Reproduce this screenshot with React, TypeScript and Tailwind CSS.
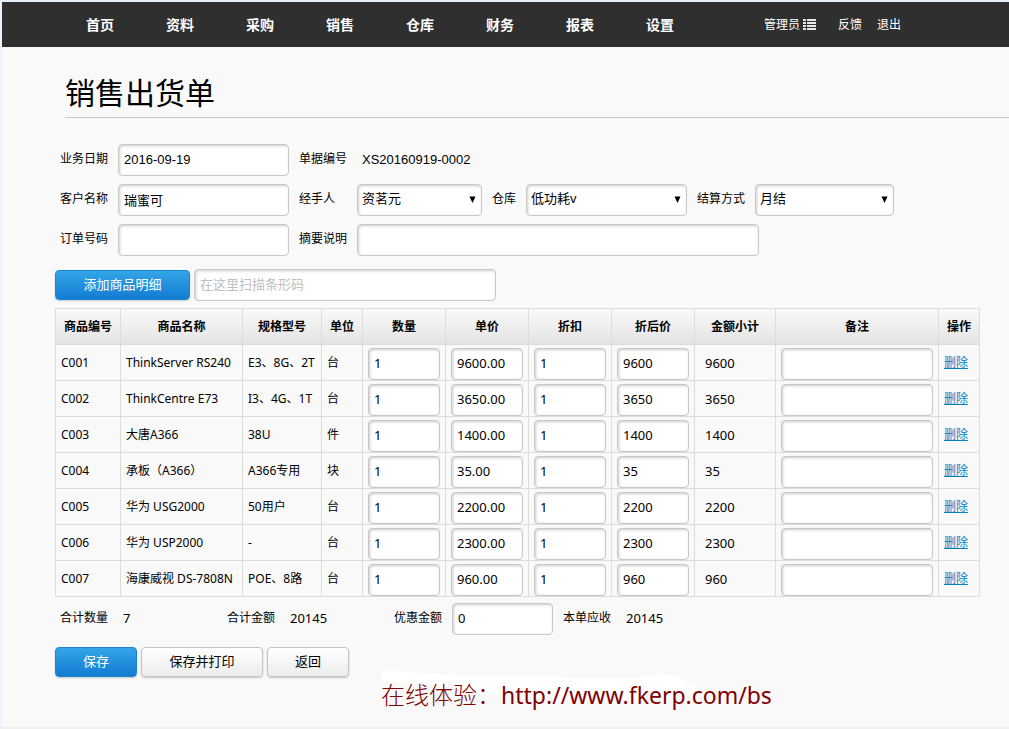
import React, { useState } from 'react';

const navItems = ['首页', '资料', '采购', '销售', '仓库', '财务', '报表', '设置'];

interface OrderLine {
  code: string;
  name: string;
  spec: string;
  unit: string;
  qty: string;
  price: string;
  discount: string;
  net: string;
  subtotal: string;
}

const initialLines: OrderLine[] = [
  { code: 'C001', name: 'ThinkServer RS240', spec: 'E3、8G、2T', unit: '台', qty: '1', price: '9600.00', discount: '1', net: '9600', subtotal: '9600' },
  { code: 'C002', name: 'ThinkCentre E73', spec: 'I3、4G、1T', unit: '台', qty: '1', price: '3650.00', discount: '1', net: '3650', subtotal: '3650' },
  { code: 'C003', name: '大唐A366', spec: '38U', unit: '件', qty: '1', price: '1400.00', discount: '1', net: '1400', subtotal: '1400' },
  { code: 'C004', name: '承板（A366）', spec: 'A366专用', unit: '块', qty: '1', price: '35.00', discount: '1', net: '35', subtotal: '35' },
  { code: 'C005', name: '华为 USG2000', spec: '50用户', unit: '台', qty: '1', price: '2200.00', discount: '1', net: '2200', subtotal: '2200' },
  { code: 'C006', name: '华为 USP2000', spec: '-', unit: '台', qty: '1', price: '2300.00', discount: '1', net: '2300', subtotal: '2300' },
  { code: 'C007', name: '海康威视 DS-7808N', spec: 'POE、8路', unit: '台', qty: '1', price: '960.00', discount: '1', net: '960', subtotal: '960' },
];

const columns = [
  { title: '商品编号', width: 'w-[65px]' },
  { title: '商品名称', width: 'w-[122px]' },
  { title: '规格型号', width: 'w-[79px]' },
  { title: '单位', width: 'w-[41px]' },
  { title: '数量', width: 'w-[83px]' },
  { title: '单价', width: 'w-[83px]' },
  { title: '折扣', width: 'w-[83px]' },
  { title: '折后价', width: 'w-[83px]' },
  { title: '金额小计', width: 'w-[81px]' },
  { title: '备注', width: '' },
  { title: '操作', width: 'w-[41px]' },
];

const field =
  'h-8 rounded border border-[#c8c8c8] bg-white px-[5px] pb-0.5 text-[13px] text-black shadow-[inset_1px_1px_3px_rgba(0,0,0,0.2)] outline-none placeholder:text-[#c0c0c0]';
const arial = "font-['Liberation_Sans','Noto_Sans_CJK_SC',sans-serif]";
const blueButton =
  'h-[30px] rounded border border-[#1c85cf] bg-linear-to-b from-[#33a5e8] to-[#127cd2] text-[13px] text-white shadow-[0_1px_2px_rgba(0,0,0,0.2)]';
const grayButton =
  'h-[30px] rounded border border-[#c4c4c4] bg-linear-to-b from-white to-[#ececec] text-[13px] text-black shadow-[0_1px_2px_rgba(0,0,0,0.2)]';
const fieldCell = 'pt-[3px]';

const Label: React.FC<{ htmlFor: string; children: string; className?: string }> = ({ htmlFor, children, className = 'w-12' }) => (
  <label htmlFor={htmlFor} className={`shrink-0 whitespace-nowrap pb-0.5 ${className}`}>{children}</label>
);

const Select: React.FC<{ id: string; value: string; className: string }> = ({ id, value, className }) => (
  <div className={`relative ${className}`}>
    <select id={id} defaultValue={value} className={`${field} ${arial} w-full appearance-none pl-1 pr-4`}>
      <option>{value}</option>
    </select>
    <svg className="pointer-events-none absolute right-1.5 top-3 h-[7px] w-[7px]" viewBox="0 0 7 7" aria-hidden="true">
      <path d="M0.5 0.5h6L3.5 7z" fill="#000" />
    </svg>
  </div>
);

const Header: React.FC = () => (
  <header className="flex h-[45px] items-center bg-[#2f2f2f] pl-[58px] text-white">
    <nav className="flex text-sm font-bold">
      {navItems.map((item) => (
        <a key={item} href="#" className="w-20 text-center">{item}</a>
      ))}
    </nav>
    <div className="ml-16 flex items-center whitespace-nowrap">
      <a href="#" className="flex items-center gap-[3px]">
        管理员
        <svg className="h-[11px] w-[13px]" viewBox="0 0 13 11" fill="#e8e8e8" aria-hidden="true">
          <path d="M0 0h3v2H0zM4 0h9v2H4zM0 3h3v2H0zM4 3h9v2H4zM0 6h3v2H0zM4 6h9v2H4zM0 9h3v2H0zM4 9h9v2H4z" />
        </svg>
      </a>
      <a href="#" className="ml-[22px]">反馈</a>
      <a href="#" className="ml-[15px]">退出</a>
    </div>
  </header>
);

const App: React.FC = () => {
  const [lines, setLines] = useState(initialLines);

  const removeLine = (e: React.MouseEvent, code: string) => {
    e.preventDefault();
    setLines(lines.filter((line) => line.code !== code));
  };

  return (
    <div className="min-h-screen border-y-2 border-l-2 border-t-[#e9eff8] border-b-[#efefef] border-l-[#edf2fb] bg-[#f9f9f9] font-['Noto_Sans','Noto_Sans_CJK_SC',sans-serif] text-xs text-black">
      <Header />

      <h1 className="ml-[63px] mt-[22px] border-b border-[#c8c8c8] pb-1 font-['Noto_Sans_CJK_SC',sans-serif] text-3xl font-normal leading-[44px]">销售出货单</h1>

      <form className="ml-[53px] mr-[29px]" onSubmit={(e) => e.preventDefault()}>
        <div className="mt-[26px] flex flex-col gap-2 pl-[5px]">
          <div className="flex items-center gap-2.5">
            <Label htmlFor="date">业务日期</Label>
            <input id="date" className={`${field} ${arial} w-[171px]`} defaultValue="2016-09-19" />
            <Label htmlFor="number">单据编号</Label>
            <output id="number" className={`${arial} pl-[5px] text-[13px]`}>XS20160919-0002</output>
          </div>
          <div className="flex items-center gap-2.5">
            <Label htmlFor="customer">客户名称</Label>
            <input id="customer" className={`${field} ${arial} w-[171px]`} defaultValue="瑞蜜可" />
            <Label htmlFor="handler">经手人</Label>
            <Select id="handler" value="资茗元" className="w-[125px]" />
            <Label htmlFor="warehouse" className="w-6">仓库</Label>
            <Select id="warehouse" value="低功耗v" className="w-[161px]" />
            <Label htmlFor="settlement">结算方式</Label>
            <Select id="settlement" value="月结" className="w-[139px]" />
          </div>
          <div className="flex items-center gap-2.5">
            <Label htmlFor="order">订单号码</Label>
            <input id="order" className={`${field} w-[171px]`} />
            <Label htmlFor="summary">摘要说明</Label>
            <input id="summary" className={`${field} w-[402px]`} />
          </div>
        </div>

        <div className="mt-[13px] flex items-center gap-1">
          <button type="button" className={`${blueButton} w-[135px]`}>添加商品明细</button>
          <input aria-label="在这里扫描条形码" placeholder="在这里扫描条形码" className={`${field} w-[302px]`} />
        </div>

        <table className="mt-[7px] w-full table-fixed border-collapse">
          <thead>
            <tr className="h-9 bg-linear-to-b from-[#f9f9f9] to-[#e3e3e3]">
              {columns.map((col) => (
                <th key={col.title} className={`${col.width} whitespace-nowrap border border-[#dcdcdc] p-0 font-bold`}>{col.title}</th>
              ))}
            </tr>
          </thead>
          <tbody>
            {lines.map((line) => (
              <tr key={line.code} className="*:whitespace-nowrap *:border *:border-[#dcdcdc] *:px-[5px]">
                <td>{line.code}</td>
                <td>{line.name}</td>
                <td>{line.spec}</td>
                <td>{line.unit}</td>
                <td className={fieldCell}><input aria-label="数量" className={`${field} block w-full`} defaultValue={line.qty} /></td>
                <td className={fieldCell}><input aria-label="单价" className={`${field} block w-full`} defaultValue={line.price} /></td>
                <td className={fieldCell}><input aria-label="折扣" className={`${field} block w-full`} defaultValue={line.discount} /></td>
                <td className={fieldCell}><input aria-label="折后价" className={`${field} block w-full`} defaultValue={line.net} /></td>
                <td className="pt-[3px] text-[13px]"><span className="pl-[5px]">{line.subtotal}</span></td>
                <td className={fieldCell}><input aria-label="备注" className={`${field} block w-full`} /></td>
                <td><a href="#" className="text-[#0a7fc4] underline" onClick={(e) => removeLine(e, line.code)}>删除</a></td>
              </tr>
            ))}
          </tbody>
        </table>

        <div className="mt-1.5 flex items-center gap-2.5 pl-[5px]">
          <Label htmlFor="total-qty">合计数量</Label>
          <output id="total-qty" className="w-[99px] pl-[5px] text-[13px]">7</output>
          <Label htmlFor="total-amount">合计金额</Label>
          <output id="total-amount" className="w-[99px] pl-[5px] text-[13px]">20145</output>
          <Label htmlFor="rebate">优惠金额</Label>
          <input id="rebate" className={`${field} w-[101px]`} defaultValue="0" />
          <Label htmlFor="receivable">本单应收</Label>
          <output id="receivable" className="pl-[5px] text-[13px]">20145</output>
        </div>

        <div className="mt-3 flex gap-1">
          <button type="submit" className={`${blueButton} w-[82px]`}>保存</button>
          <button type="button" className={`${grayButton} w-[122px]`}>保存并打印</button>
          <button type="button" className={`${grayButton} w-[82px]`}>返回</button>
        </div>
      </form>

      <p className="relative isolate ml-[379px] whitespace-nowrap text-2xl leading-9 text-[#800000]">
        <svg className="absolute -top-2 left-0 -z-10 h-8 w-80" viewBox="0 0 320 32" fill="#fff" aria-hidden="true">
          <path d="M0 4Q3 1 15 2Q75 8 145 7Q215 10 260 9Q275 4 297 6L305 13Q316 12 315 19Q312 26 298 28Q250 34 207 28Q125 31 90 20Q35 14 4 13Q-1 9 0 4z" />
        </svg>
        <span className="font-light">在线体验：</span>
        <a href="http://www.fkerp.com/bs" className="text-[23px]">http://www.fkerp.com/bs</a>
      </p>
    </div>
  );
};

export default App;
